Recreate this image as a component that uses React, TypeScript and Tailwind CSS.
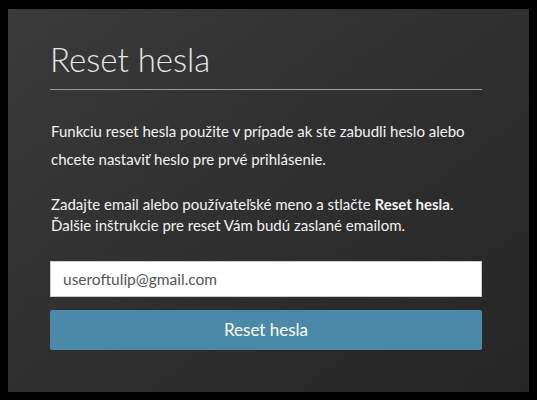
export default function App() {
  return (
    <div className="w-[537px] h-[400px] bg-black pt-[9px] pl-[8px]" style={{ fontFamily: '"Segoe UI", Lato, "Noto Sans", sans-serif' }}>
      <div className="w-[521px] h-[383px] bg-gradient-to-br from-[#3a3a3a] to-[#252525] pl-[42px] pr-[47px] pt-[28px]">
        <h1 className="font-light text-[33px] leading-[44px] text-[#e6e6e6] pb-[8px] border-b border-[#9a9a9a]">
          Reset hesla
        </h1>
        <p className="mt-[27px] text-[15px] leading-[28px] text-[#f2f2f2] pl-px">
          Funkciu reset hesla použite v prípade ak ste zabudli heslo alebo chcete nastaviť heslo pre prvé prihlásenie.
        </p>
        <p className="mt-[21px] text-[15px] leading-[21px] text-[#f2f2f2] pl-px">
          Zadajte email alebo používateľské meno a stlačte <b className="font-bold">Reset hesla</b>.
          <br />
          Ďalšie inštrukcie pre reset Vám budú zaslané emailom.
        </p>
        <input
          className="mt-[25px] block w-full h-[36px] bg-white border border-[#cccccc] px-[12px] text-[15.5px] text-[#555555] outline-none"
          defaultValue="useroftulip@gmail.com"
        />
        <button className="mt-[13px] block w-full h-[40px] bg-[#4a8aa8] rounded-[2px] text-white text-[17px]">
          Reset hesla
        </button>
      </div>
    </div>
  );
}
